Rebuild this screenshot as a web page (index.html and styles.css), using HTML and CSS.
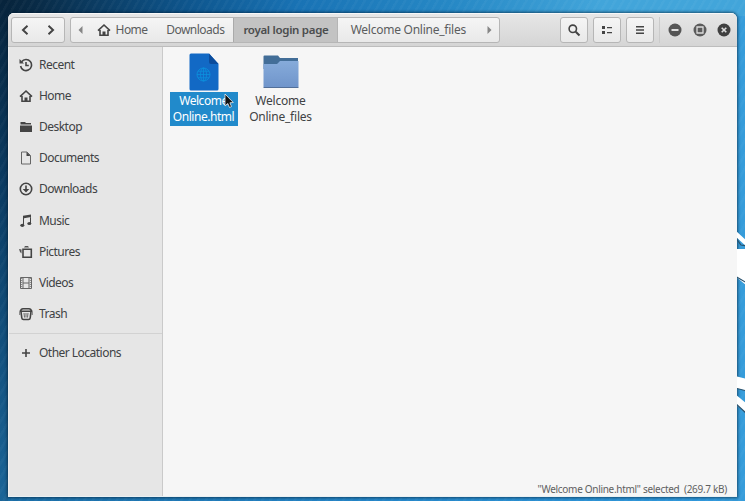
FILE: index.html
```html
<!DOCTYPE html>
<html lang="en">
<head>
<meta charset="utf-8">
<title>royal login page</title>
<link rel="stylesheet" href="styles.css">
</head>
<body>
<svg class="wallpaper" viewBox="0 0 30 501" width="30" height="501">
  <g fill="#fff">
    <path d="M20 230L32 241V247L20 236Z"/>
    <path d="M20 249L32 249V286L20 276Z"/>
    <path d="M20 376L32 379V391L20 388Z"/>
    <path d="M20 394L32 404V414L20 404Z"/>
  </g>
  <path d="M20 237L26 245L32 246M20 276L32 283M20 388L32 391M20 403L32 414" fill="none" stroke="#27516d" stroke-width="1.200"/>
</svg>
<div class="window">
  <header class="bar">
    <div class="group nav">
      <button aria-label="Back"><svg width="16" height="16" viewBox="0 0 16 16"><path class="line bold" d="M10.500 3.800L6 8L10.500 12.200"/></svg></button>
      <button aria-label="Forward"><svg width="16" height="16" viewBox="0 0 16 16"><path class="line bold" d="M5.500 3.800L10 8L5.500 12.200"/></svg></button>
    </div>
    <nav class="group path">
      <span class="arrow"><svg width="5" height="8" viewBox="0 0 5 8"><path d="M4.500 0V8L.5 4Z"/></svg></span>
      <span class="crumb home"><svg width="14" height="14" viewBox="0 0 14 14"><path class="line" d="M1 7.700L7 2L13 7.700M3 7V12.200H11V7"/><path d="M5.500 8.500h3v4h-3z"/></svg>Home</span>
      <span class="crumb downloads">Downloads</span>
      <span class="crumb current">royal login page</span>
      <span class="crumb files">Welcome Online_files</span>
      <span class="arrow right"><svg width="5" height="8" viewBox="0 0 5 8"><path d="M.5 0V8L4.500 4Z"/></svg></span>
    </nav>
    <div class="tools">
      <button class="tool" aria-label="Search"><svg width="14" height="14" viewBox="0 0 14 14"><circle class="line" cx="5.800" cy="5.800" r="3.700"/><path class="line bold" d="M8.700 8.700L12.500 12.500"/></svg></button>
      <button class="tool" aria-label="View"><svg width="12" height="12" viewBox="0 0 12 12"><path d="M1 2h3v3H1zM1 7h3v3H1zM6 3h5v1.300H6zM6 8h5v1.300H6z"/></svg></button>
      <button class="tool" aria-label="Menu"><svg width="12" height="12" viewBox="0 0 12 12"><path d="M2 2h8v1.500H2zM2 5.300h8v1.500H2zM2 8.600h8v1.500H2z"/></svg></button>
    </div>
    <div class="controls">
      <svg width="14" height="14" viewBox="0 0 14 14"><circle cx="7" cy="7" r="6.500" fill="#555"/><path d="M3.500 6h7v2h-7z" fill="#ddd"/></svg>
      <svg width="14" height="14" viewBox="0 0 14 14"><circle cx="7" cy="7" r="6.500" fill="#5b5b5b"/><path d="M4 4h6v6H4z" fill="none" stroke="#ddd" stroke-width="1.300"/></svg>
      <svg width="14" height="14" viewBox="0 0 14 14"><circle cx="7" cy="7" r="6.500" fill="#404040"/><path d="M4.700 4.700L9.300 9.300M9.300 4.700L4.700 9.300" stroke="#ddd" stroke-width="1.600"/></svg>
    </div>
  </header>
  <div class="body">
    <aside>
      <ul>
        <li><svg width="14" height="14" viewBox="0 0 14 14"><path class="line" d="M2.600 3.800A5.500 5.500 0 1 1 1.600 8M7 4V7.500H9.800"/><path d="M.5 1V5.500H5Z"/></svg>Recent</li>
        <li><svg width="14" height="14" viewBox="0 0 14 14"><path class="line" d="M1 7.700L7 2L13 7.700M3 7V12.200H11V7"/><path d="M5.500 8.500h3v4h-3z"/></svg>Home</li>
        <li><svg width="14" height="14" viewBox="0 0 14 14"><path d="M1.500 2H6L7 3H12V4.500H1.500ZM1 5.500H13V12H1Z"/></svg>Desktop</li>
        <li><svg width="14" height="14" viewBox="0 0 14 14"><path class="thin" d="M2.500 1H8L11.500 4.500V13H2.500Z"/><path d="M7.500 1V5H11.500Z"/></svg>Documents</li>
        <li><svg width="14" height="14" viewBox="0 0 14 14"><circle class="line" cx="7" cy="7" r="5.700"/><path d="M6.200 3.500H7.800V7H10.300L7 10.500L3.700 7H6.200Z"/></svg>Downloads</li>
        <li><svg width="14" height="14" viewBox="0 0 14 14"><path d="M4 1.800L12 .5V3L5 4.200V11H4ZM11 1H12V9H11Z"/><ellipse cx="3.300" cy="11.300" rx="2" ry="1.600"/><ellipse cx="10.300" cy="9.500" rx="2" ry="1.600"/></svg>Music</li>
        <li><svg width="14" height="14" viewBox="0 0 14 14"><path class="line" d="M4 4.200H12.300V12.200H4Z"/><path d="M5 2.500L6 1H9L10 2.500ZM0 4L2.500 4.500V8.500L1 7Z" fill="#555"/></svg>Pictures</li>
        <li><svg width="14" height="14" viewBox="0 0 14 14"><path class="thin" d="M1.500 1.500H12.500V12.500H1.500ZM4 1.500V12.500M10 1.500V12.500M4 7H10"/><path d="M2.700 2V12M11.300 2V12" stroke="#777" stroke-dasharray="1 1"/></svg>Videos</li>
        <li><svg width="14" height="14" viewBox="0 0 14 14"><path class="line" d="M1.500 4Q2 1.700 4 1.700H10Q12 1.700 12.500 4M.5 4.200H13.500M2 4.500L2.800 11Q3 12.500 4.500 12.500H9.500Q11 12.500 11.200 11L12 4.500"/><path class="thin" d="M5 6L5.500 10.500M7 6V10.500M9 6L8.500 10.500M.8 5V8M13.200 5V8"/></svg>Trash</li>
        <li class="other"><svg width="14" height="14" viewBox="0 0 14 14"><path class="line" d="M7 3V11M3 7H11"/></svg>Other Locations</li>
      </ul>
    </aside>
    <main>
      <div class="grid">
        <figure class="selected">
          <svg width="34" height="38" viewBox="0 0 34 38"><path d="M4 .5Q2.500 .5 2.500 2V36Q2.500 37.500 4 37.500H30Q31.500 37.500 31.500 36V11L22 .5Z" fill="#1269c5"/><path d="M22 .5L31.500 11H24Q22 11 22 9Z" fill="#0b4c9c"/><g fill="none" stroke="#0b91dd" stroke-width=".8"><circle cx="16.500" cy="21.500" r="6.500"/><ellipse cx="16.500" cy="21.500" rx="3" ry="6.500"/><path d="M16.500 15V28M10 21.500H23M11 18.200H22M11 24.800H22"/></g></svg>
          <figcaption>Welcome<br>Online.html</figcaption>
          <svg class="cursor" width="10" height="16" viewBox="0 0 10 16"><path d="M1 1V13L3.800 10.500L5.500 14.500L7.500 13.600L5.900 9.800L9.300 9.500Z" fill="#111" stroke="#eee" stroke-width=".8"/></svg>
        </figure>
        <figure>
          <svg width="38" height="38" viewBox="0 0 38 38"><defs><linearGradient id="folder" x2="0" y2="1"><stop stop-color="#86abda"/><stop offset="1" stop-color="#7095cb"/></linearGradient></defs><path d="M1.500 3.500Q1.500 2.500 2.500 2.500H16L18 5H36V16H1.500Z" fill="#436e98"/><path d="M1.500 11H15L18 8H36.500V34H1.500Z" fill="url(#folder)"/><path d="M1.500 34.500H36.500" stroke="#526f99"/></svg>
          <figcaption>Welcome<br>Online_files</figcaption>
        </figure>
      </div>
      <footer>"Welcome Online.html" selected&nbsp; (269.7 kB)</footer>
    </main>
  </div>
</div>
</body>
</html>
```
FILE: styles.css
```css
* { box-sizing: border-box; }
body {
  margin: 0;
  height: 501px;
  padding: 13px 8px 4px;
  overflow: hidden;
  font: 12px/16px "Noto Sans", "Open Sans", sans-serif;
  color: #404244;
  background:
    repeating-linear-gradient(120deg, rgba(255,255,255,.03) 0 2px, transparent 3px 7px),
    linear-gradient(90deg, transparent 0, transparent 8px, #092c48 40px, #0e568e 190px, #1973b5 300px, #2688c5 450px, #42a5da 600px, #42a5da 745px) top / 100% 16px no-repeat,
    linear-gradient(90deg, transparent 720px, #369cda 720px),
    linear-gradient(90deg, transparent 8px, #1b70a9 8px, #2689cc 400px, #319ce0 745px) bottom / 100% 8px no-repeat,
    linear-gradient(#07243c, #0b3d65 40%, #1b6598 100%);
}
svg { display: block; flex: none; fill: #444; }
.line { fill: none; stroke: #444; stroke-width: 1.6; }
.bold { stroke-width: 2; }
.thin { fill: none; stroke: #666; stroke-width: 1; }
.wallpaper { position: absolute; right: 0; top: 0; }
.window {
  position: relative;
  width: 729px;
  height: 484px;
  border-radius: 6px 6px 0 0;
  overflow: hidden;
  background: #f6f6f6;
  border-bottom: 1px solid #e9f0f3;
}
body::before {
  content: "";
  position: absolute;
  left: 8px; top: 13px;
  width: 729px; height: 484px;
  border-radius: 6px 6px 0 0;
  box-shadow: 0 0 3px 1px rgba(0,25,45,.6);
}
.bar {
  display: flex;
  height: 34px;
  padding: 4px 6px 3px 3px;
  border-bottom: 1px solid #bdbdbd;
  background: linear-gradient(#e7e7e7, #d5d5d5);
  box-shadow: inset 0 1px #f8f8f8;
}
.group, .tool {
  border: 1px solid #b6b6b6;
  border-radius: 3px;
  background: linear-gradient(#f5f5f5, #e9e9e9);
}
.group { display: flex; overflow: hidden; height: 26px; }
button { padding: 0; border: 0; background: none; display: grid; place-items: center; }
.nav { width: 54px; margin-right: 5px; }
.nav button { flex: 1; }
.path { width: 431px; color: #5b5d5e; }
.arrow { display: flex; align-items: center; padding-left: 7px; width: 21px; }
.arrow svg { fill: #858585; }
.arrow.right { padding-left: 9px; }
.crumb { display: flex; align-items: center; justify-content: center; white-space: nowrap; }
.home { width: 65px; gap: 5px; padding-right: 4px; letter-spacing: -.6px; }
.downloads { width: 78px; padding-left: 1px; letter-spacing: -.5px; }
.current {
  width: 106px;
  font-weight: 600;
  font-size: 11.5px;
  letter-spacing: -.3px;
  color: #4b4d4e;
  background: #c3c3c3;
  box-shadow: inset 1px 0 #aaa, inset -1px 0 #b5b5b5;
}
.files { width: 141px; letter-spacing: -.25px; }
.tools { display: flex; gap: 5px; margin-left: 60px; }
.tool { width: 28px; height: 26px; }
.controls { display: flex; gap: 10.5px; align-items: center; margin-left: 5px; padding-left: 8px; height: 26px; border-left: 1px solid #cbcbcb; }
.body { display: flex; height: 449px; }
aside { width: 155px; background: #e6e6e6; border-right: 1px solid #cacaca; border-left: 1px solid #eee; }
ul { margin: 0; padding: 2.500px 0 0; list-style: none; }
li { display: flex; align-items: center; height: 31.1px; padding-left: 10px; gap: 6px; letter-spacing: -.52px; }
.other { margin-top: 3.500px; height: 39px; border-top: 1px solid #d2d2d2; }
main { display: flex; flex-direction: column; flex: 1; justify-content: space-between; }
.grid { display: flex; gap: 6px; padding: 6px 0 0 5px; }
figure { position: relative; margin: 0; width: 71px; display: flex; flex-direction: column; align-items: center; }
figcaption { margin-top: 1px; padding: 1px 3px; height: 34px; line-height: 16px; text-align: center; letter-spacing: -.22px; white-space: nowrap; }
.selected figcaption { width: 68px; color: #fff; background: #218acb; letter-spacing: -.45px; }
.cursor { position: absolute; left: 56px; top: 40px; }
footer { padding: 0 10px 0 0; text-align: right; font-size: 10px; line-height: 14px; letter-spacing: -.3px; color: #5e6061; }
```
